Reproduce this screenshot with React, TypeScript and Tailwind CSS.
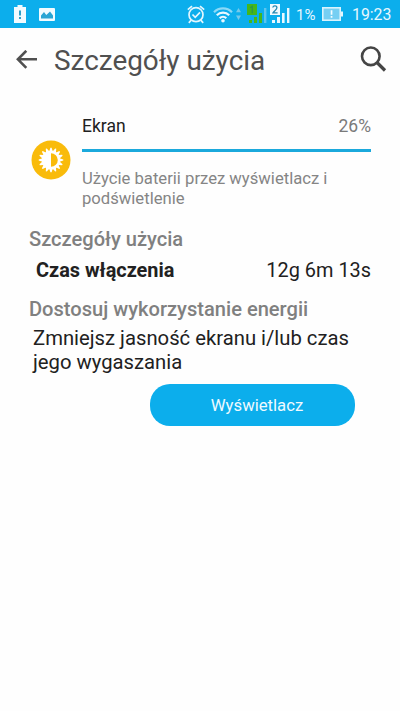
const GEAR_TEETH = Array.from({ length: 16 }, (_, i) => i * 22.5)

function StatusBar() {
  return (
    <div className="flex h-7 items-center bg-[#0caeec] text-[#e6f7fe]">
      <svg className="ml-[14px] shrink-0" width="12" height="18" viewBox="0 0 12 18">
        <path d="M3.5 0h5v2H12v16H0V2h3.5z" fill="#f2fbff" />
        <path d="M5 5.5h2v5H5zM5 12h2v2H5z" fill="#2f9fc9" />
      </svg>
      <svg className="ml-[13px] shrink-0" width="16" height="13" viewBox="0 0 16 13">
        <rect width="16" height="13" rx="1" fill="#f2fbff" />
        <path d="M2 10.5V7.5L5 4l2.3 3L11 3.5l3 4v3z" fill="#2aa5d4" />
      </svg>

      <svg className="ml-[132px] shrink-0" width="18" height="19" viewBox="0 0 18 19" fill="none" stroke="#e2f6fe" strokeWidth="1.7">
        <circle cx="9" cy="9.7" r="7" />
        <path d="M5.5 9.5l2.7 2.8 4.8-5" />
        <path d="M.8 4.7L5 1.2M17.2 4.7L13 1.2M4.2 15.2l-2.4 2.6M13.8 15.2l2.4 2.6" />
      </svg>
      <svg className="ml-2 shrink-0" width="20" height="17" viewBox="0 0 20 17" fill="none" strokeWidth="2.2">
        <path d="M1 6.2a12.5 12.5 0 0 1 18 0" stroke="#8bd9f7" />
        <path d="M3.8 9.3a8.7 8.7 0 0 1 12.4 0" stroke="#e8f8ff" />
        <path d="M6.7 12.2a4.7 4.7 0 0 1 6.6 0" stroke="#e8f8ff" />
        <circle cx="10" cy="14.7" r="1.8" fill="#e8f8ff" />
      </svg>
      <svg className="ml-[3px] shrink-0" width="5" height="12" viewBox="0 0 5 12" fill="#75caea">
        <path d="M0 4.2L2.5 0 5 4.2zM0 7.5h5L2.5 12z" />
      </svg>
      <SignalOne />
      <SignalTwo />
      <span className="ml-[6px] w-[20px] whitespace-nowrap pt-0.5 text-[15px] leading-none">1%</span>
      <svg className="ml-[6px] shrink-0" width="21" height="14" viewBox="0 0 21 14">
        <rect x="0.8" y="0.8" width="17.4" height="12.4" fill="#76cff3" stroke="#d9f3fd" strokeWidth="1.6" />
        <path d="M19 4.5h2v5h-2z" fill="#e5f7fe" />
        <path d="M8.7 3.3h1.7v4.4H8.7zM8.7 9h1.7v1.7H8.7z" fill="#f5fcff" />
      </svg>
      <span className="ml-[9px] whitespace-nowrap pt-0.5 text-[15.8px] leading-none">19:23</span>
    </div>
  )
}

function SignalOne() {
  return (
    <svg className="ml-[6px] shrink-0" width="20" height="20" viewBox="0 0 20 20">
      <path d="M0 0h10v11H0z" fill="#45b61c" />
      <path d="M3.2 3.8L5.3 2.4v6.8" fill="none" stroke="#2a9a48" strokeWidth="1.3" />
      <path d="M2 16h3v3H2zM7 13h3v6H7zM12 9h3v10h-3z" fill="#45b61c" />
      <path d="M17 4h2.4v15H17z" fill="#5cc5ee" />
    </svg>
  )
}

function SignalTwo() {
  return (
    <svg className="ml-[3px] shrink-0" width="20" height="20" viewBox="0 0 20 20">
      <path d="M0 0h10v11H0z" fill="#f2fbff" />
      <path d="M2.8 3.5C3.2 1.3 7 1.4 6.9 3.8 6.9 5.5 4 7 3 8.8h4.6" fill="none" stroke="#2689b2" strokeWidth="1.3" />
      <path d="M2 16h3v3H2zM7 13h3v6H7zM12 9h2.6v10H12zM17 4h2.4v15H17z" fill="#e9f8ff" />
    </svg>
  )
}

function Header() {
  return (
    <header className="flex h-[63px] items-center text-[#505050]">
      <svg className="ml-4 shrink-0" width="22" height="20" viewBox="0 0 22 20" fill="none" stroke="currentColor" strokeWidth="2.6">
        <path d="M21 9.3H2M10.3 .8L1.9 9.3l8.4 8.5" />
      </svg>
      <h1 className="ml-[16px] flex-1 whitespace-nowrap pt-0.5 text-[27.9px] leading-8">Szczegóły użycia</h1>
      <svg className="mr-[13px] shrink-0" width="27" height="27" viewBox="0 0 27 27" fill="none" stroke="#454545">
        <circle cx="10.8" cy="10.3" r="8.8" strokeWidth="2.6" />
        <path d="M17 16.5l8 8" strokeWidth="3.2" />
      </svg>
    </header>
  )
}

function BrightnessIcon() {
  return (
    <svg className="shrink-0" width="40" height="40" viewBox="-20 -20 40 40">
      <circle r="19.5" fill="#f9bb0b" />
      <g fill="#fff">
        {GEAR_TEETH.map((angle) => (
          <path key={angle} d="M-1.8-8.5L-.6-12.3H.6L1.8-8.5z" transform={`rotate(${angle})`} />
        ))}
        <circle r="9.4" />
      </g>
      <path d="M0-6.8a6.8 6.8 0 0 1 0 13.6z" fill="#f9bb0b" />
    </svg>
  )
}

export default function App() {
  return (
    <div className="h-[711px] w-[400px] overflow-hidden bg-[#fefefe] font-[Roboto,sans-serif] text-[#212121]">
      <StatusBar />
      <Header />

      <section className="flex pt-6 pl-[31px] pr-[29px]">
        <div className="pt-[25px]">
          <BrightnessIcon />
        </div>
        <div className="ml-[11px] flex-1">
          <div className="flex justify-between text-[17.5px] leading-[23px]">
            <span>Ekran</span>
            <span className="text-[#7a7a7a]">26%</span>
          </div>
          <div className="mt-[11px] h-[3px] bg-[#1ba9dc]" />
          <p className="mt-[17px] whitespace-nowrap text-[16.65px] leading-[19.5px] text-[#858585]">
            Użycie baterii przez wyświetlacz i
            <br />
            podświetlenie
          </p>
        </div>
      </section>

      <section className="pt-[19px] pl-[29px] pr-[29px]">
        <h2 className="text-[20.1px] leading-6 font-medium text-[#808080]">Szczegóły użycia</h2>
        <div className="mt-2 flex justify-between pl-[7px] text-[19.9px] leading-6">
          <span className="font-bold">Czas włączenia</span>
          <span>12g 6m 13s</span>
        </div>
      </section>

      <section className="pt-[14px] pl-[29px]">
        <h2 className="text-[20.1px] leading-6 font-medium text-[#808080]">Dostosuj wykorzystanie energii</h2>
        <p className="mt-[6px] whitespace-nowrap pl-1 text-[20.25px] leading-[23.5px]">
          Zmniejsz jasność ekranu i/lub czas
          <br />
          jego wygaszania
        </p>
        <button className="mt-[10px] ml-[121px] block h-[42px] w-[205px] rounded-[20px] bg-[#0caeec] pt-0.5 pl-[9px] text-[16.7px] text-[#effaff]">
          Wyświetlacz
        </button>
      </section>
    </div>
  )
}
